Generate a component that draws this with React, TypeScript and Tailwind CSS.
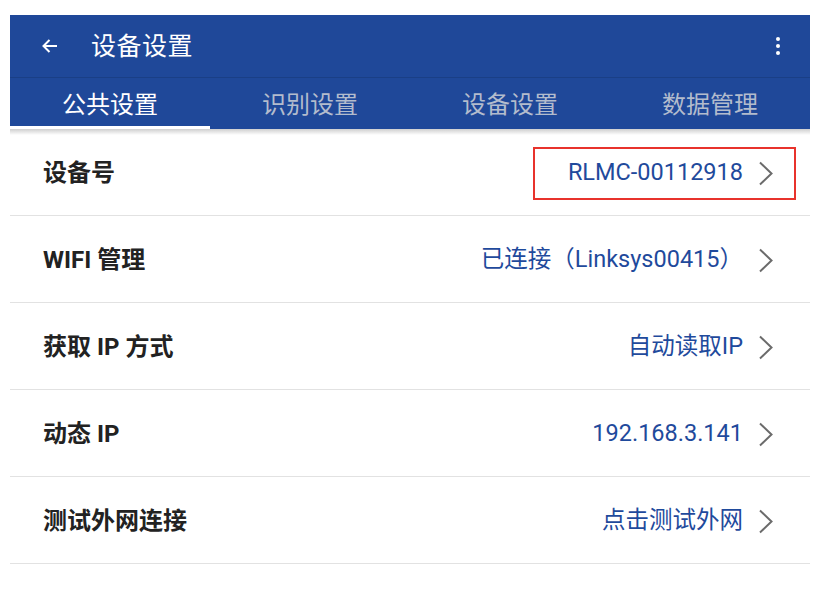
import React from "react";

const rows = [
  { label: "设备号", value: "RLMC-00112918", boxed: true },
  { label: "WIFI 管理", value: "已连接（Linksys00415）" },
  { label: "获取 IP 方式", value: "自动读取IP" },
  { label: "动态 IP", value: "192.168.3.141" },
  { label: "测试外网连接", value: "点击测试外网" },
];

const tabs = ["公共设置", "识别设置", "设备设置", "数据管理"];

function Chevron() {
  return (
    <svg width="16" height="25" viewBox="0 0 16 25" className="shrink-0">
      <path d="M2 1.5 L13.5 12.5 L2 23.5" fill="none" stroke="#6b6b6b" strokeWidth="2" />
    </svg>
  );
}

export default function App() {
  return (
    <div
      className="w-[818px] h-[602px] bg-white pt-[15px] pl-[10px] overflow-hidden"
      style={{ fontFamily: "Roboto, 'Noto Sans CJK SC', sans-serif" }}
    >
      <div className="w-[800px]">
        <div className="bg-[#1f4899]">
          <div className="h-[63px] flex items-center border-b border-[#1a3f86]">
            <svg width="16" height="16" viewBox="0 0 16 16" className="ml-[32px]">
              <path d="M15 8 H1.5 M7.5 2 L1.5 8 L7.5 14" fill="none" stroke="#fff" strokeWidth="2" />
            </svg>
            <div className="ml-[33px] text-white text-[25px] leading-none tracking-[0.5px]">设备设置</div>
            <div className="ml-auto mr-[30px] flex flex-col gap-[3px]">
              <span className="w-[4px] h-[4px] rounded-full bg-white" />
              <span className="w-[4px] h-[4px] rounded-full bg-white" />
              <span className="w-[4px] h-[4px] rounded-full bg-white" />
            </div>
          </div>
          <div className="h-[51px] flex">
            {tabs.map((t, i) => (
              <div key={t} className="w-[200px] flex flex-col">
                <div
                  className={
                    "flex-1 flex items-center justify-center text-[24px] leading-none pt-[5px] " +
                    (i === 0 ? "text-white" : "text-[#b3bccd]")
                  }
                >
                  {t}
                </div>
                <div className={"h-[3px] " + (i === 0 ? "bg-white" : "bg-transparent")} />
              </div>
            ))}
          </div>
        </div>
        <div className="h-[6px] bg-gradient-to-b from-[#cfcfcf] to-white" />
        <div className="-mt-[6px]">
          {rows.map((r) => (
            <div key={r.label} className="h-[87px] flex items-center border-b border-[#e2e2e2] pl-[33px] pr-[36px] pt-[2px]">
              <div className="text-[24px] font-bold text-[#222]">{r.label}</div>
              <div
                className={
                  "ml-auto flex items-center " +
                  (r.boxed ? "border-2 border-[#e8332c] h-[53px] pl-[33px] pr-[20px] -mr-[22px]" : "")
                }
              >
                <span className="text-[23.5px] text-[#1f4a9c] mr-[15px]">{r.value}</span>
                <Chevron />
              </div>
            </div>
          ))}
        </div>
      </div>
    </div>
  );
}
